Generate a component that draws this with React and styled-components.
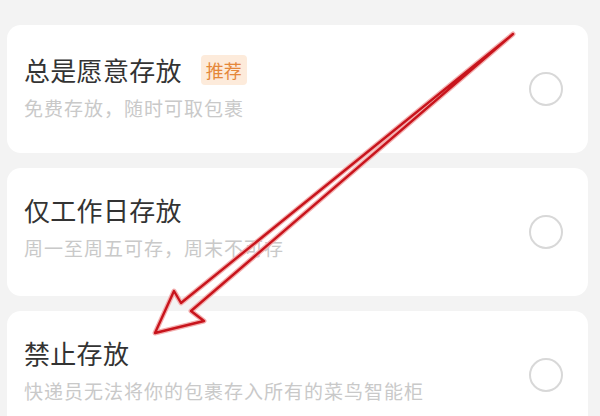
import React from 'react'
import styled, { createGlobalStyle } from 'styled-components';

const Global = createGlobalStyle`
    html, body {
        margin: 0;
        padding: 0;
        background: #f3f3f3;
    }
    body {
        font-family: "Noto Sans CJK SC", "Noto Sans", sans-serif;
    }
`;

const Page = styled.div`
    position: relative;
    width: 600px;
    height: 416px;
    overflow: hidden;
    padding: 25px 12px 0 7px;
    box-sizing: border-box;
    display: flex;
    flex-direction: column;
    gap: 15px;
`;

const Card = styled.div`
    background: #fff;
    border-radius: 14px;
    height: 128px;
    flex-shrink: 0;
    box-sizing: border-box;
    padding: 0 25px 0 17px;
    display: flex;
    align-items: center;
    justify-content: space-between;
`;

const Info = styled.div`
    display: flex;
    flex-direction: column;
    gap: 10px;
    margin-top: ${p => p.$offset || 0}px;
`;

const TitleRow = styled.div`
    display: flex;
    align-items: center;
    gap: 19px;
`;

const Title = styled.div`
    font-size: 26px;
    line-height: 32px;
    color: #333;
    letter-spacing: 0.3px;
`;

const Badge = styled.span`
    display: inline-flex;
    align-items: center;
    justify-content: center;
    width: 46px;
    height: 30px;
    border-radius: 4px;
    background: #fdebdb;
    color: #e5873a;
    font-size: 18px;
`;

const Sub = styled.div`
    font-size: 19px;
    line-height: 24px;
    color: #c9c9c9;
    letter-spacing: 1px;
`;

const Radio = styled.div`
    width: 34px;
    height: 34px;
    border-radius: 50%;
    border: 2px solid #d8d8d8;
    box-sizing: border-box;
    flex-shrink: 0;
`;

const Arrow = styled.svg`
    position: absolute;
    left: 0;
    top: 0;
    pointer-events: none;
`;

const options = [
    { title: '总是愿意存放', sub: '免费存放，随时可取包裹', badge: '推荐', offset: -4 },
    { title: '仅工作日存放', sub: '周一至周五可存，周末不可存', offset: -10 },
    { title: '禁止存放', sub: '快递员无法将你的包裹存入所有的菜鸟智能柜', offset: -10 },
];

const App = () => {
    return (
        <Page>
            <Global />
            {options.map(o => (
                <Card key={o.title}>
                    <Info $offset={o.offset}>
                        <TitleRow>
                            <Title>{o.title}</Title>
                            {o.badge && <Badge>{o.badge}</Badge>}
                        </TitleRow>
                        <Sub>{o.sub}</Sub>
                    </Info>
                    <Radio />
                </Card>
            ))}
            <Arrow width="600" height="416" viewBox="0 0 600 416">
                <polygon
                    points="513,34 191,311 204,321 155,333 174,291 181,303"
                    fill="none"
                    stroke="#f3b0b0"
                    strokeWidth="5"
                    strokeLinejoin="round"
                />
                <polygon
                    points="513,34 191,311 204,321 155,333 174,291 181,303"
                    fill="none"
                    stroke="#c8141c"
                    strokeWidth="2.4"
                    strokeLinejoin="round"
                />
            </Arrow>
        </Page>
    )
}

export default App;
